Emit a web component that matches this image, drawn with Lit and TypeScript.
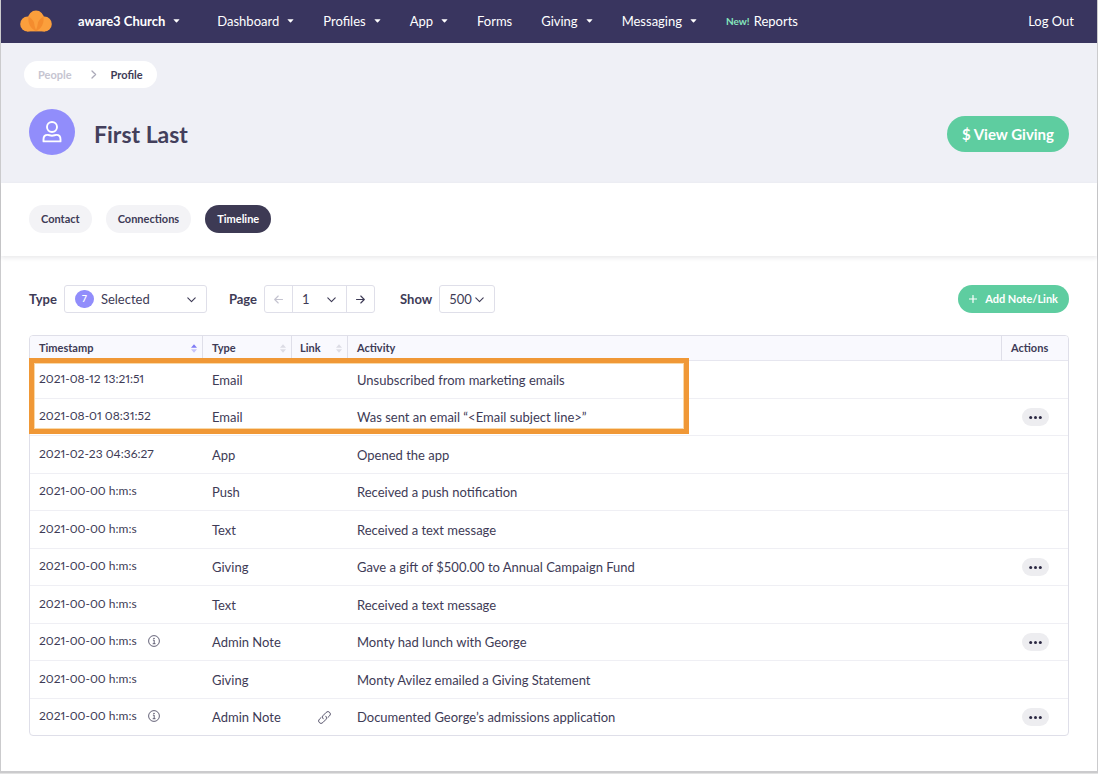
import { LitElement, html, css, svg, nothing } from "lit";
import { customElement, state } from "lit/decorators.js";
import { classMap } from "lit/directives/class-map.js";

interface NavItem {
  label: string;
  menu: boolean;
  isNew?: boolean;
}

interface Entry {
  time: string;
  type: string;
  activity: string;
  info?: boolean;
  link?: boolean;
  actions?: boolean;
}

const NAV: NavItem[] = [
  { label: "Dashboard", menu: true },
  { label: "Profiles", menu: true },
  { label: "App", menu: true },
  { label: "Forms", menu: false },
  { label: "Giving", menu: true },
  { label: "Messaging", menu: true },
  { label: "Reports", menu: false, isNew: true },
];

const ENTRIES: Entry[] = [
  { time: "2021-08-12 13:21:51", type: "Email", activity: "Unsubscribed from marketing emails" },
  { time: "2021-08-01 08:31:52", type: "Email", activity: "Was sent an email “<Email subject line>”", actions: true },
  { time: "2021-02-23 04:36:27", type: "App", activity: "Opened the app" },
  { time: "2021-00-00 h:m:s", type: "Push", activity: "Received a push notification" },
  { time: "2021-00-00 h:m:s", type: "Text", activity: "Received a text message" },
  { time: "2021-00-00 h:m:s", type: "Giving", activity: "Gave a gift of $500.00 to Annual Campaign Fund", actions: true },
  { time: "2021-00-00 h:m:s", type: "Text", activity: "Received a text message" },
  { time: "2021-00-00 h:m:s", type: "Admin Note", activity: "Monty had lunch with George", info: true, actions: true },
  { time: "2021-00-00 h:m:s", type: "Giving", activity: "Monty Avilez emailed a Giving Statement" },
  { time: "2021-00-00 h:m:s", type: "Admin Note", activity: "Documented George’s admissions application", info: true, link: true, actions: true },
];

const caret = html`<svg class="caret" width="7" height="4" viewBox="0 0 7 4" aria-hidden="true">
  <path d="M0.9 0.3h5.2q0.6 0 0.2 0.5L4 3.3q-0.5 0.5-1 0L0.7 0.8q-0.4-0.5 0.2-0.5z" fill="currentColor" />
</svg>`;

const chevron = html`<svg class="chevron" width="9" height="6" viewBox="0 0 9 6" aria-hidden="true">
  <path d="M0.8 0.9L4.5 4.7L8.2 0.9" fill="none" stroke="currentColor" stroke-width="1.1" stroke-linecap="round" stroke-linejoin="round" />
</svg>`;

const arrow = (back: boolean) => html`<svg width="9" height="9" viewBox="0 0 9 9" aria-hidden="true">
  ${back
    ? svg`<path d="M8.5 4.5H0.8M4.2 1L0.7 4.5L4.2 8" fill="none" stroke="currentColor" stroke-width="1.1" stroke-linecap="round" stroke-linejoin="round" />`
    : svg`<path d="M0.5 4.5H8.2M4.8 1L8.3 4.5L4.8 8" fill="none" stroke="currentColor" stroke-width="1.1" stroke-linecap="round" stroke-linejoin="round" />`}
</svg>`;

@customElement("app-root")
export class AppRoot extends LitElement {
  @state() private tab = "Timeline";

  static styles = css`
    :host {
      display: block;
      box-sizing: border-box;
      min-height: 100vh;
      padding-bottom: 1px;
      background: #e2e2e2;
      font-family: Lato, "Open Sans", sans-serif;
      font-size: 13px;
      line-height: 18px;
      color: #3e3b56;
    }
    * {
      box-sizing: border-box;
    }
    a {
      color: inherit;
      text-decoration: none;
    }
    button,
    select {
      font: inherit;
      color: inherit;
      margin: 0;
      padding: 0;
      border: 0;
      background: none;
      cursor: pointer;
    }
    svg {
      display: block;
      flex: none;
    }
    .page {
      min-height: calc(100vh - 1px);
      background: #fff;
      border: solid #cbcbcd;
      border-width: 0 1px 2px;
    }
    .nav {
      display: flex;
      align-items: center;
      height: 43px;
      padding: 0 23px 2px 18px;
      background: #39355f;
      color: #fff;
    }
    .nav a,
    .nav button {
      display: flex;
      align-items: center;
      gap: 8px;
      white-space: nowrap;
    }
    .logo {
      margin-right: 25px;
    }
    .nav .org {
      font-weight: 700;
      margin-right: 37px;
    }
    .menu {
      display: flex;
      gap: 29px;
      flex: 1;
    }
    .nav .new {
      gap: 4px;
    }
    .badge-new {
      font-size: 10px;
      font-weight: 700;
      color: #86e6bd;
    }
    .head {
      background: #eff0f6;
      height: 140px;
      padding: 18px 28px 0 23px;
    }
    .crumbs {
      display: inline-flex;
      align-items: center;
      height: 27px;
      padding: 0 14px;
      border-radius: 14px;
      background: #fff;
      font-size: 11px;
      font-weight: 700;
    }
    .crumbs a {
      color: #c6c5d1;
    }
    .crumbs svg {
      margin: 0 14px 0 19px;
      color: #aaa9b8;
    }
    .person {
      display: flex;
      align-items: center;
      margin-top: 21px;
      padding-left: 5px;
    }
    .avatar {
      display: grid;
      place-items: center;
      width: 46px;
      height: 46px;
      border-radius: 50%;
      background: #918dfb;
    }
    h1 {
      flex: 1;
      margin: 4px 0 0 19px;
      font-size: 23px;
      line-height: 28px;
      font-weight: 700;
      color: #433f5c;
    }
    .give {
      height: 36px;
      margin-top: 4px;
      padding: 0 15px;
      border-radius: 18px;
      background: #5ecda0;
      color: #fff;
      font-size: 15px;
      font-weight: 700;
    }
    .tabs {
      display: flex;
      gap: 14px;
      height: 73px;
      padding: 22px 28px 0;
      box-shadow: 0 2px 4px rgba(40, 40, 60, 0.1);
    }
    .tab {
      height: 28px;
      padding: 0 12px;
      border-radius: 14px;
      background: #f3f3f6;
      font-size: 11px;
      font-weight: 700;
    }
    .tab.on {
      background: #3d3a54;
      color: #fff;
    }
    .body {
      padding: 29px 28px 35px;
    }
    .tools {
      display: flex;
      align-items: center;
      margin-bottom: 22px;
    }
    .tools label {
      font-weight: 700;
      margin-right: 7px;
    }
    .field {
      position: relative;
      display: flex;
      height: 28px;
      margin-right: 22px;
      border: 1px solid #dfdfe9;
      border-radius: 3px;
      background: #fff;
    }
    .pager {
      margin-right: 25px;
    }
    .field select {
      appearance: none;
      height: 26px;
      border-radius: 3px;
    }
    .field .chevron {
      position: absolute;
      right: 10px;
      top: 11px;
      pointer-events: none;
    }
    .kind select {
      width: 141px;
      padding-left: 36px;
    }
    .count {
      position: absolute;
      left: 10px;
      top: 4px;
      width: 19px;
      height: 18px;
      border-radius: 9px;
      background: #918dfb;
      color: #fff;
      font-size: 9px;
      font-weight: 700;
      text-align: center;
      pointer-events: none;
    }
    .pager button {
      display: grid;
      place-items: center;
      width: 27px;
    }
    .pager button:disabled {
      color: #c4c3d0;
    }
    .pick {
      position: relative;
      display: flex;
      border: solid #dfdfe9;
      border-width: 0 1px;
    }
    .pick select,
    .size select {
      width: 53px;
      padding-left: 9px;
    }
    .size select {
      width: 54px;
    }
    .add {
      display: flex;
      align-items: center;
      gap: 8px;
      height: 28px;
      margin-left: auto;
      padding: 0 11px;
      border-radius: 14px;
      background: #5ecda0;
      color: #fff;
      font-size: 11px;
      font-weight: 700;
    }
    .sheet {
      position: relative;
    }
    table {
      width: 100%;
      table-layout: fixed;
      border-collapse: separate;
      border-spacing: 0;
      border: 1px solid #dfdfe9;
      border-radius: 4px;
    }
    th,
    td {
      padding: 0 0 0 9px;
      text-align: left;
      border-bottom: 1px solid #efeff4;
    }
    th {
      height: 25px;
      background: #f9f9fe;
      border-bottom-color: #e6e6ef;
      border-right: 1px solid #dfdfe9;
      font-size: 11px;
      line-height: 16px;
      font-weight: 700;
    }
    th:first-child {
      border-top-left-radius: 3px;
    }
    th:last-child {
      border-right: 0;
      border-top-right-radius: 3px;
    }
    .c-time {
      width: 173px;
    }
    .c-type {
      width: 89px;
    }
    .c-link {
      width: 56px;
      padding-left: 8px;
    }
    .c-act {
      width: 66px;
    }
    .c-more {
      padding-left: 20px;
    }
    .sort {
      display: flex;
      align-items: center;
      justify-content: space-between;
      width: 100%;
      padding-right: 5px;
    }
    td {
      height: 37px;
    }
    tr:nth-child(odd) td {
      height: 38px;
    }
    tbody tr:last-child td {
      border-bottom: 0;
      height: 36px;
    }
    .time {
      display: flex;
      align-items: center;
      gap: 11px;
      padding-bottom: 2px;
      font-variant-numeric: proportional-nums;
      font-size: 12px;
    }
    .linked {
      display: block;
      width: 13px;
      margin-left: 17px;
    }
    .more {
      display: grid;
      place-items: center;
      width: 27px;
      height: 18px;
      border-radius: 9px;
      background: #ededf0;
      color: #2b2842;
    }
    .mark {
      position: absolute;
      left: 0;
      top: 23px;
      width: 660px;
      height: 76px;
      border: 5px solid #f09836;
      box-shadow: inset 0 0 0 1px #f9d9a8;
      pointer-events: none;
    }
  `;

  private sortIcon(up: string, down: string) {
    return html`<svg width="6" height="9" viewBox="0 0 6 9" aria-hidden="true">
      <path d="M3 0.3L6 3.8H0z" fill=${up} />
      <path d="M3 8.7L6 5.2H0z" fill=${down} />
    </svg>`;
  }

  private row(e: Entry) {
    return html`<tr>
      <td>
        <div class="time">
          <span>${e.time}</span>
          ${e.info
            ? html`<svg width="12" height="12" viewBox="0 0 12 12" role="img" aria-label="Details">
                <circle cx="6" cy="6" r="5.4" fill="none" stroke="currentColor" stroke-width="0.8" />
                <circle cx="6" cy="3.4" r="0.7" fill="currentColor" />
                <path d="M4.9 5.1H6.2V8.6M4.7 8.7H7.5" fill="none" stroke="currentColor" stroke-width="0.8" />
              </svg>`
            : nothing}
        </div>
      </td>
      <td>${e.type}</td>
      <td>
        ${e.link
          ? html`<a class="linked" href="#" aria-label="Open link">
              <svg width="13" height="13" viewBox="0 0 13 13" aria-hidden="true">
                <g fill="none" stroke="currentColor" stroke-width="0.9" stroke-linecap="round" stroke-linejoin="round">
                  <path d="M5.3 7.9C4.2 6.9 4.2 5.4 5.2 4.4L8.2 1.4C9.2 0.4 10.7 0.4 11.6 1.4C12.6 2.3 12.6 3.8 11.6 4.8L9.9 6.5" />
                  <path d="M7.7 5.1C8.8 6.1 8.8 7.6 7.8 8.6L4.8 11.6C3.8 12.6 2.3 12.6 1.4 11.6C0.4 10.7 0.4 9.2 1.4 8.2L3.1 6.5" />
                </g>
              </svg>
            </a>`
          : nothing}
      </td>
      <td>${e.activity}</td>
      <td class="c-more">
        ${e.actions
          ? html`<button class="more" aria-label="More actions">
              <svg width="13" height="3" viewBox="0 0 13 3" fill="currentColor" aria-hidden="true">
                <circle cx="1.7" cy="1.5" r="1.5" />
                <circle cx="6.5" cy="1.5" r="1.5" />
                <circle cx="11.3" cy="1.5" r="1.5" />
              </svg>
            </button>`
          : nothing}
      </td>
    </tr>`;
  }

  render() {
    return html`<div class="page">
      <nav class="nav">
        <a class="logo" href="#" aria-label="Home">
          <svg width="34" height="22" viewBox="0 0 34 22" aria-hidden="true">
            <circle cx="17" cy="8.6" r="8" fill="#fb9f3c" />
            <circle cx="8.6" cy="14" r="7.4" fill="#fb9f3c" />
            <circle cx="25.4" cy="14" r="7.4" fill="#fb9f3c" />
            <rect x="8" y="12" width="18" height="9.4" fill="#fb9f3c" />
            <path d="M16.9 21.2C11.6 18.6 8.6 13.4 9.6 6.8C14.2 9.2 17 14 16.9 21.2z" fill="#f48c2e" />
            <path d="M17.1 21.2C22.4 18.6 25.4 13.4 24.4 6.8C19.8 9.2 17 14 17.1 21.2z" fill="#f48c2e" />
            <path d="M17 19.5C14.6 14.5 14.6 10 17 6.4C19.4 10 19.4 14.5 17 19.5z" fill="#fb9f3c" />
          </svg>
        </a>
        <button class="org">aware3 Church ${caret}</button>
        <div class="menu">
          ${NAV.map((n) =>
            n.menu
              ? html`<button>${n.label} ${caret}</button>`
              : html`<a href="#" class=${classMap({ new: !!n.isNew })}>
                  ${n.isNew ? html`<span class="badge-new">New!</span>` : nothing}<span>${n.label}</span>
                </a>`
          )}
        </div>
        <a href="#">Log Out</a>
      </nav>

      <header class="head">
        <div class="crumbs">
          <a href="#">People</a>
          <svg width="6" height="9" viewBox="0 0 6 9" aria-hidden="true">
            <path d="M1 1L4.6 4.5L1 8" fill="none" stroke="currentColor" stroke-width="1.3" stroke-linecap="round" stroke-linejoin="round" />
          </svg>
          <span>Profile</span>
        </div>
        <div class="person">
          <div class="avatar">
            <svg width="20" height="22" viewBox="0 0 20 22" fill="none" stroke="#fff" stroke-width="1.9" stroke-linejoin="round" aria-hidden="true">
              <circle cx="10" cy="6" r="5" />
              <path d="M1.5 20.4H18.5V18.4C18.5 15.6 16.9 13.9 14.4 13.9C12.8 13.9 12.1 14.7 10 14.7C7.9 14.7 7.2 13.9 5.6 13.9C3.1 13.9 1.5 15.6 1.5 18.4z" />
            </svg>
          </div>
          <h1>First Last</h1>
          <button class="give">$ View Giving</button>
        </div>
      </header>

      <div class="tabs">
        ${["Contact", "Connections", "Timeline"].map(
          (t) => html`<button class=${classMap({ tab: true, on: this.tab === t })} @click=${() => (this.tab = t)}>${t}</button>`
        )}
      </div>

      <main class="body">
        <div class="tools">
          <label for="kind">Type</label>
          <div class="field kind">
            <select id="kind"><option>Selected</option></select>
            <span class="count">7</span>
            ${chevron}
          </div>
          <label for="pageno">Page</label>
          <div class="field pager">
            <button disabled aria-label="Previous page">${arrow(true)}</button>
            <div class="pick">
              <select id="pageno"><option>1</option></select>
              ${chevron}
            </div>
            <button aria-label="Next page">${arrow(false)}</button>
          </div>
          <label for="size">Show</label>
          <div class="field size">
            <select id="size"><option>500</option></select>
            ${chevron}
          </div>
          <button class="add">
            <svg width="8" height="8" viewBox="0 0 8 8" aria-hidden="true">
              <path d="M4 0.5V7.5M0.5 4H7.5" stroke="currentColor" stroke-width="1.2" stroke-linecap="round" />
            </svg>
            Add Note/Link
          </button>
        </div>

        <div class="sheet">
          <table>
            <thead>
              <tr>
                <th class="c-time"><button class="sort">Timestamp ${this.sortIcon("#7f7bf5", "#c5c3fb")}</button></th>
                <th class="c-type"><button class="sort">Type ${this.sortIcon("#dcdce5", "#dcdce5")}</button></th>
                <th class="c-link"><button class="sort">Link ${this.sortIcon("#dcdce5", "#dcdce5")}</button></th>
                <th>Activity</th>
                <th class="c-act">Actions</th>
              </tr>
            </thead>
            <tbody>
              ${ENTRIES.map((e) => this.row(e))}
            </tbody>
          </table>
          <div class="mark"></div>
        </div>
      </main>
    </div>`;
  }
}
